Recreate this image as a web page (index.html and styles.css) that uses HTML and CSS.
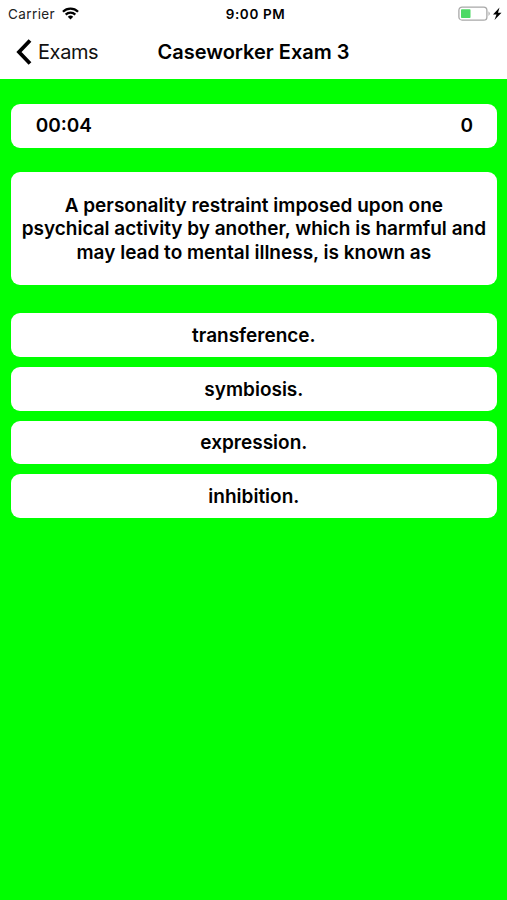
FILE: index.html
```html
<!DOCTYPE html>
<html lang="en">
<head>
<meta charset="utf-8">
<title>Caseworker Exam 3</title>
<link rel="stylesheet" href="styles.css">
</head>
<body>
<header class="header">
  <div class="status">
    <div class="carrier"><span class="carrier-name">Carrier</span>
      <svg class="wifi" width="17" height="13" viewBox="0 0 18 13"><g fill="none" stroke="#000" stroke-width="2.4"><path d="M1 4.6a11.5 11.5 0 0 1 16 0"/><path d="M3.9 7.7a7.3 7.3 0 0 1 10.2 0"/></g><path d="M9 12.8 6.1 9.9a4.2 4.2 0 0 1 5.8 0Z"/></svg>
    </div>
    <div class="clock">9:00 PM</div>
    <div class="power">
      <svg width="45" height="16" viewBox="0 0 45 16"><rect x=".9" y="1.100" width="28" height="13" rx="3.200" fill="#fff" stroke="#a8a8a8" stroke-width="1.300"/><rect x="3" y="3.200" width="9.500" height="8.800" rx=".8" fill="#4cd964"/><path d="M30.500 5.300q2.600 2.300 0 4.600Z" fill="#a8a8a8"/><path d="m41.500 1.500-6.500 7h3.500L36.500 14l7-7.300H40Z"/></svg>
    </div>
  </div>
  <nav class="nav">
    <a class="back"><svg width="16" height="28" viewBox="0 0 16 28"><path d="M14 2.500 3 14l11 11.500" fill="none" stroke="#000" stroke-width="3.800"/></svg><span class="back-text">Exams</span></a>
    <h1 class="title">Caseworker Exam 3</h1>
  </nav>
</header>
<main class="exam">
  <section class="card score"><span class="time">00:04</span><span class="points">0</span></section>
  <section class="card question"><span class="q1">A personality restraint imposed upon one</span><span class="q2">psychical activity by another, which is harmful and</span><span class="q3">may lead to mental illness, is known as</span></section>
  <section class="answers">
    <button class="card answer a1">transference.</button>
    <button class="card answer a2">symbiosis.</button>
    <button class="card answer a3">expression.</button>
    <button class="card answer a4">inhibition.</button>
  </section>
</main>
</body>
</html>
```
FILE: styles.css
```css
* { box-sizing: border-box; }
body { margin: 0; min-height: 900px; background: #00ff00; color: #000; font-family: Inter, "Liberation Sans", sans-serif; }
.header { height: 79px; background: #fff; }
.status { height: 27px; display: grid; grid-template-columns: 1fr auto 1fr; align-items: center; padding: 0 4px 0 8px; font-size: 13.5px; }
.carrier { display: flex; align-items: center; gap: 7px; color: #222; }
.carrier-name { letter-spacing: 0.4px; }
.clock { font-weight: 600; font-size: 13.5px; letter-spacing: 0.6px; }
.power { display: flex; justify-content: flex-end; }
.nav { height: 50px; display: grid; grid-template-columns: 1fr auto 1fr; align-items: center; padding: 0 16px; }
.back { display: flex; align-items: center; gap: 6px; font-size: 20px; color: #111; }
.back-text { letter-spacing: -0.4px; }
.title { margin: 0; font-size: 20px; font-weight: 600; }
.exam { padding: 24.7px 10px 0 10.7px; }
.card { background: #fff; border-radius: 9px; font-size: 19px; font-weight: 600; }
.score { height: 44px; display: flex; justify-content: space-between; align-items: center; padding: 0 24px 0 25px; }
.question { height: 113px; margin-top: 23.9px; padding-top: 2px; display: flex; flex-direction: column; align-items: center; justify-content: center; line-height: 23.3px; white-space: nowrap; }
.answers { margin-top: 28.7px; display: flex; flex-direction: column; gap: 10px; }
.answer { height: 43.7px; border: 0; padding: 0.5px 0 0; width: 100%; font-family: inherit; color: #000; }
```
